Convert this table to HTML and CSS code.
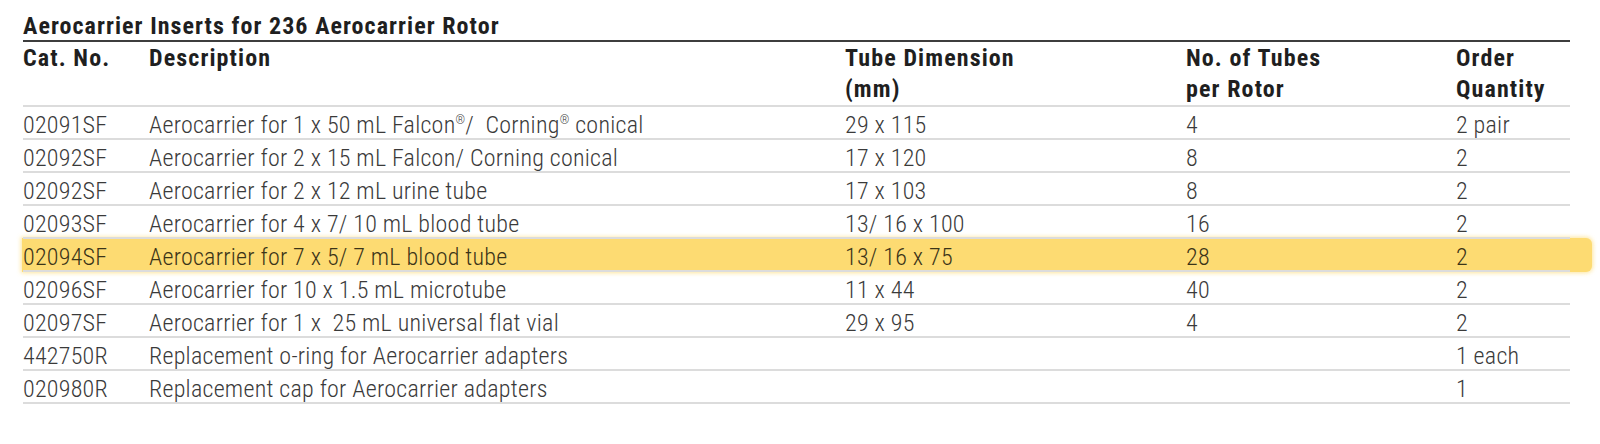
FILE: index.html
```html
<!DOCTYPE html>
<html lang="en">
<head>
<meta charset="utf-8">
<title>Aerocarrier Inserts for 236 Aerocarrier Rotor</title>
<link rel="stylesheet" href="styles.css">
</head>
<body>
<section class="sheet">
  <h2 class="title">Aerocarrier Inserts for 236 Aerocarrier Rotor</h2>
  <div class="table">
    <div class="row head">
      <div>Cat. No.</div>
      <div>Description</div>
      <div>Tube Dimension<br>(mm)</div>
      <div>No. of Tubes<br>per Rotor</div>
      <div>Order<br>Quantity</div>
    </div>
    <div class="row">
      <div>02091SF</div>
      <div>Aerocarrier for 1 x 50 mL Falcon<sup>®</sup>/&nbsp; Corning<sup>®</sup> conical</div>
      <div>29 x 115</div>
      <div>4</div>
      <div>2 pair</div>
    </div>
    <div class="row">
      <div>02092SF</div>
      <div>Aerocarrier for 2 x 15 mL Falcon/ Corning conical</div>
      <div>17 x 120</div>
      <div>8</div>
      <div>2</div>
    </div>
    <div class="row">
      <div>02092SF</div>
      <div>Aerocarrier for 2 x 12 mL urine tube</div>
      <div>17 x 103</div>
      <div>8</div>
      <div>2</div>
    </div>
    <div class="row">
      <div>02093SF</div>
      <div>Aerocarrier for 4 x 7/ 10 mL blood tube</div>
      <div>13/ 16 x 100</div>
      <div>16</div>
      <div>2</div>
    </div>
    <div class="row hl">
      <div>02094SF</div>
      <div>Aerocarrier for 7 x 5/ 7 mL blood tube</div>
      <div>13/ 16 x 75</div>
      <div>28</div>
      <div>2</div>
    </div>
    <div class="row">
      <div>02096SF</div>
      <div>Aerocarrier for 10 x 1.5 mL microtube</div>
      <div>11 x 44</div>
      <div>40</div>
      <div>2</div>
    </div>
    <div class="row">
      <div>02097SF</div>
      <div>Aerocarrier for 1 x&nbsp; 25 mL universal flat vial</div>
      <div>29 x 95</div>
      <div>4</div>
      <div>2</div>
    </div>
    <div class="row">
      <div>442750R</div>
      <div>Replacement o-ring for Aerocarrier adapters</div>
      <div></div>
      <div></div>
      <div>1 each</div>
    </div>
    <div class="row">
      <div>020980R</div>
      <div>Replacement cap for Aerocarrier adapters</div>
      <div></div>
      <div></div>
      <div>1</div>
    </div>
  </div>
</section>
</body>
</html>
```
FILE: styles.css
```css
html, body {
  margin: 0;
  padding: 0;
  background: #ffffff;
}
body {
  font-family: "Roboto", "Liberation Sans", sans-serif;
  color: #3a3a3a;
}
.sheet {
  width: 1547px;
  margin-left: 23px;
  padding-top: 13px;
}
.title {
  margin: 0;
  font-size: 24px;
  line-height: 27px;
  font-weight: 700;
  font-stretch: 75%;
  letter-spacing: 1.05px;
  color: #1f1f1f;
  border-bottom: 2px solid #3d3d3d;
}
.table {
  display: flex;
  flex-direction: column;
  position: relative;
  z-index: 0;
}
.row {
  display: grid;
  grid-template-columns: 126px 696px 341px 270px 114px;
  font-size: 24px;
  font-weight: 300;
  font-stretch: 75%;
  letter-spacing: 0.25px;
  line-height: 28px;
  padding-top: 4px;
  height: 27px;
  border-bottom: 2px solid #dcdcdc;
  position: relative;
  white-space: nowrap;
}
.row.head {
  font-weight: 700;
  letter-spacing: 1.1px;
  color: #1f1f1f;
  line-height: 31px;
  height: 62px;
  padding-top: 1px;
}
.row sup {
  font-size: 12px;
  line-height: 0;
  vertical-align: 9px;
}
.row.hl {
  color: #3b3418;
}
.row.hl::before {
  content: "";
  position: absolute;
  left: -1px;
  right: -22px;
  top: -1px;
  bottom: -2px;
  background: #fddb72;
  border-radius: 0 6px 6px 0;
  box-shadow: 0 0 4px 1px rgba(253, 219, 114, 0.7);
  z-index: -1;
}
```
